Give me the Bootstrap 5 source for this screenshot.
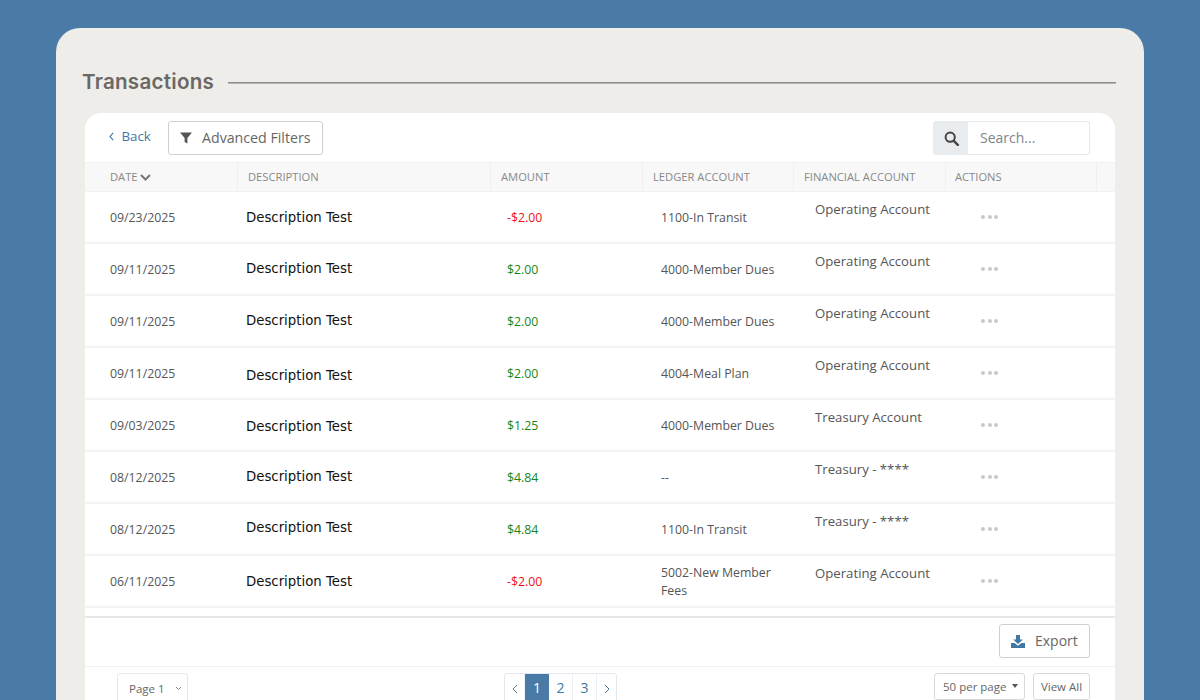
<!DOCTYPE html>
<html lang="en">
<head>
<meta charset="utf-8">
<title>Transactions</title>
<link rel="stylesheet" href="https://cdn.jsdelivr.net/npm/bootstrap@5.3.0/dist/css/bootstrap.min.css">
<style>
html,body{height:700px;overflow:hidden}
body{background:#4a7ba6;font-family:"Open Sans","Liberation Sans",sans-serif;color:#555;font-size:12px;padding:28px 56px 0}
.sheet{background:#eeedea;border-radius:24px 24px 0 0;height:672px;padding:40px 28px 0 26px;overflow:hidden}
.title-row{height:29px;margin-bottom:16px}
.title-text{font-family:"Inter","Noto Sans",sans-serif;font-size:20.600px;font-weight:600;color:#6b6863;line-height:28px;margin:0 0 2px;letter-spacing:.25px}
.title-rule{background:#8b8b87;border-bottom:1px solid #b4b4b0;height:2px;margin-left:14px;margin-top:1px}
.panel{background:#fff;border-radius:16px 16px 0 0;margin-left:3px;margin-right:1px;height:600px;overflow:hidden}
.tools{height:49px;padding:8px 25px 0 24px}
.back-link{color:#3f77a5;font-size:13.300px;text-decoration:none;line-height:30px;width:59px;white-space:nowrap}
.back-link svg{margin-right:4px;vertical-align:0}
.line-btn{background:#fff;border:1px solid #cfcfcf;border-radius:3px;color:#666;font-size:14.200px;height:34px;padding:0 11px;line-height:32px;display:inline-flex;align-items:center}
.line-btn svg{margin-right:10px}
.export-btn{font-size:14px;padding:0 11px 0 11px;width:91px}
.seek{width:157px;height:34px}
.seek .input-group-text{background:#e9ecef;border:1px solid #e9ecef;border-radius:3px 0 0 3px;width:36px;padding:0;justify-content:center}
.seek .form-control{border:1px solid #e3e9ef;border-left:0;border-radius:0 3px 3px 0;font-size:14px;padding:0 11px 2px 12px;height:34px;color:#666}
.seek .form-control::placeholder{color:#7d858c;opacity:1}
.ledger{table-layout:fixed;width:1030px;margin:0;border-collapse:separate;border-spacing:0}
.ledger th{background:#f8f8f8;border-top:1px solid #f1f1f1;border-bottom:1px solid #f1f1f1;border-right:1px solid #f0f0f0;color:#888;font-size:11.200px;font-weight:400;text-transform:uppercase;height:30px;padding:0 0 0 10px;vertical-align:middle}
.ledger th:first-child{padding-left:25px}
.ledger th:last-child{border-right:0}
.ledger th.h-act{padding-left:9px}
.ledger td{height:52px;border-bottom:2px solid #f3f3f3;padding:2px 0 0;vertical-align:middle;color:#555;font-size:12.300px;line-height:18px}
.ledger td:first-child{padding-left:25px}
.ledger td.c-desc{padding:2px 0 0 8px;font-family:"DejaVu Sans",sans-serif;font-size:13.300px;color:#111}
.ledger td.c-amt{padding-left:16px}
.ledger td.c-amt.neg{color:#f01414}
.ledger td.c-amt.pos{color:#148714}
.ledger td.c-led{padding-left:18px;padding-right:10px}
.ledger td.c-fin{padding:8px 0 0 21px;font-size:13.200px;vertical-align:top}
.ledger td.c-act{padding:0 0 0 35px}
.dots{display:flex;gap:2.500px;padding-bottom:1px}
.dots i{width:4px;height:4px;border-radius:50%;background:#c9c9c9}
.up1{margin-top:-2px;display:block}.up2{margin-top:-4px;display:block}.dn1{margin-top:2px;display:block}.dn2{margin-top:4px;display:block}
.export-bar{border-top:2px solid #e6e6e6;margin-top:8px;height:51px;border-bottom:1px solid #f0f0f0;padding:6px 25px 0 0}
.pager-row{padding:6px 25px 0 32px}
.thin-btn{background:#fff;border:1px solid #d9d9d9;border-radius:3px;color:#666;font-size:11.500px;height:27px;padding:0 8px;line-height:25px;display:inline-flex;align-items:center;white-space:nowrap}
.page-pick{border-color:#e3e9ef;width:71px;padding:0 0 0 11px;height:30px}
.page-pick svg{margin-left:10px}
.page-strip{border:1px solid #e3e9ef;border-radius:3px;height:30px;overflow:hidden;margin:0 0 0 316px}
.page-strip a{display:block;width:24px;text-align:center;font-size:14px;line-height:28px;color:#3f77a5;text-decoration:none;border-right:1px solid #eef1f4}
.page-strip a:first-child{width:20px}
.page-strip a:last-child{border-right:0;width:19px}
.page-strip a.on{background:#4a7ba6;color:#fff;border-right:0}
.caret-d{width:0;height:0;border-left:3.500px solid transparent;border-right:3.500px solid transparent;border-top:4px solid #555;margin-left:6px;margin-top:-2px}
.per-page{width:91px;padding-right:6px}
.view-all{width:57px;justify-content:center;padding:0}
</style>
</head>
<body>
<div class="sheet">
  <div class="title-row d-flex align-items-center">
    <h1 class="title-text">Transactions</h1>
    <div class="title-rule flex-grow-1"></div>
  </div>
  <div class="panel">
    <div class="tools d-flex align-items-start">
      <a class="back-link" href="#"><svg width="5" height="9" viewBox="0 0 5 9"><path d="M4.200 .8 1 4.500l3.200 3.700" fill="none" stroke="#3f77a5" stroke-width="1.100"/></svg> Back</a>
      <button class="line-btn" type="button"><svg width="12" height="12" viewBox="0 0 12 12"><path d="M0 .5h12L7.400 6v5.500L4.600 10V6z" fill="#555"/></svg>Advanced Filters</button>
      <div class="input-group seek ms-auto flex-nowrap">
        <span class="input-group-text"><svg width="15" height="15" viewBox="0 0 15 15"><circle cx="6.200" cy="6.200" r="4.600" fill="none" stroke="#444" stroke-width="2"/><path d="m9.800 9.800 4 4" stroke="#444" stroke-width="2.400" stroke-linecap="round"/></svg></span>
        <input class="form-control" type="text" placeholder="Search...">
      </div>
    </div>
    <table class="ledger">
      <colgroup><col style="width:153px"><col style="width:253px"><col style="width:152px"><col style="width:151px"><col style="width:152px"><col style="width:151px"><col style="width:18px"></colgroup>
      <thead><tr><th>Date <svg width="11" height="7" viewBox="0 0 11 7" style="vertical-align:0"><path d="M1 1l4.500 4.500L10 1" fill="none" stroke="#777" stroke-width="2"/></svg></th><th>Description</th><th>Amount</th><th>Ledger Account</th><th>Financial Account</th><th class="h-act">Actions</th><th></th></tr></thead>
      <tbody>
        <tr><td>09/23/2025</td><td class="c-desc">Description Test</td><td class="c-amt neg">-$2.00</td><td class="c-led">1100-In Transit</td><td class="c-fin">Operating Account</td><td class="c-act"><div class="dots"><i></i><i></i><i></i></div></td><td></td></tr>
        <tr><td>09/11/2025</td><td class="c-desc"><span class="up1">Description Test</span></td><td class="c-amt pos">$2.00</td><td class="c-led">4000-Member Dues</td><td class="c-fin">Operating Account</td><td class="c-act"><div class="dots"><i></i><i></i><i></i></div></td><td></td></tr>
        <tr><td>09/11/2025</td><td class="c-desc"><span class="up1">Description Test</span></td><td class="c-amt pos">$2.00</td><td class="c-led">4000-Member Dues</td><td class="c-fin">Operating Account</td><td class="c-act"><div class="dots"><i></i><i></i><i></i></div></td><td></td></tr>
        <tr><td>09/11/2025</td><td class="c-desc"><span class="dn2">Description Test</span></td><td class="c-amt pos">$2.00</td><td class="c-led">4004-Meal Plan</td><td class="c-fin">Operating Account</td><td class="c-act"><div class="dots"><i></i><i></i><i></i></div></td><td></td></tr>
        <tr><td>09/03/2025</td><td class="c-desc"><span class="dn1">Description Test</span></td><td class="c-amt pos">$1.25</td><td class="c-led">4000-Member Dues</td><td class="c-fin">Treasury Account</td><td class="c-act"><div class="dots"><i></i><i></i><i></i></div></td><td></td></tr>
        <tr><td>08/12/2025</td><td class="c-desc"><span class="up1">Description Test</span></td><td class="c-amt pos">$4.84</td><td class="c-led">--</td><td class="c-fin">Treasury - ****</td><td class="c-act"><div class="dots"><i></i><i></i><i></i></div></td><td></td></tr>
        <tr><td>08/12/2025</td><td class="c-desc"><span class="up2">Description Test</span></td><td class="c-amt pos">$4.84</td><td class="c-led">1100-In Transit</td><td class="c-fin">Treasury - ****</td><td class="c-act"><div class="dots"><i></i><i></i><i></i></div></td><td></td></tr>
        <tr><td>06/11/2025</td><td class="c-desc">Description Test</td><td class="c-amt neg">-$2.00</td><td class="c-led">5002-New Member Fees</td><td class="c-fin">Operating Account</td><td class="c-act"><div class="dots"><i></i><i></i><i></i></div></td><td></td></tr>
      </tbody>
    </table>
    <div class="export-bar d-flex justify-content-end">
      <button class="line-btn export-btn" type="button"><svg width="14" height="13" viewBox="0 0 14 13"><path d="M5 0h4v4.500h2.800L7 9 2.200 4.500H5z" fill="#3f77a5"/><path d="M0 8h3.500L7 10.800 10.500 8H14v5H0z" fill="#3f77a5"/></svg>Export</button>
    </div>
    <div class="pager-row d-flex align-items-start">
      <button class="thin-btn page-pick" type="button">Page 1<svg width="7" height="5" viewBox="0 0 7 5"><path d="M1 1l2.500 2.500L6 1" fill="none" stroke="#888"/></svg></button>
      <nav class="page-strip d-flex"><a href="#"><svg width="6" height="10" viewBox="0 0 6 10"><path d="M5 1 1 5l4 4" fill="none" stroke="#777"/></svg></a><a class="on" href="#">1</a><a href="#">2</a><a href="#">3</a><a href="#"><svg width="6" height="10" viewBox="0 0 6 10"><path d="M1 1l4 4-4 4" fill="none" stroke="#3f77a5"/></svg></a></nav>
      <div class="ms-auto d-flex gap-2">
        <button class="thin-btn per-page" type="button">50 per page<span class="caret-d"></span></button>
        <button class="thin-btn view-all" type="button">View All</button>
      </div>
    </div>
  </div>
</div>
<script src="https://cdn.jsdelivr.net/npm/bootstrap@5.3.0/dist/js/bootstrap.bundle.min.js"></script>
</body>
</html>
